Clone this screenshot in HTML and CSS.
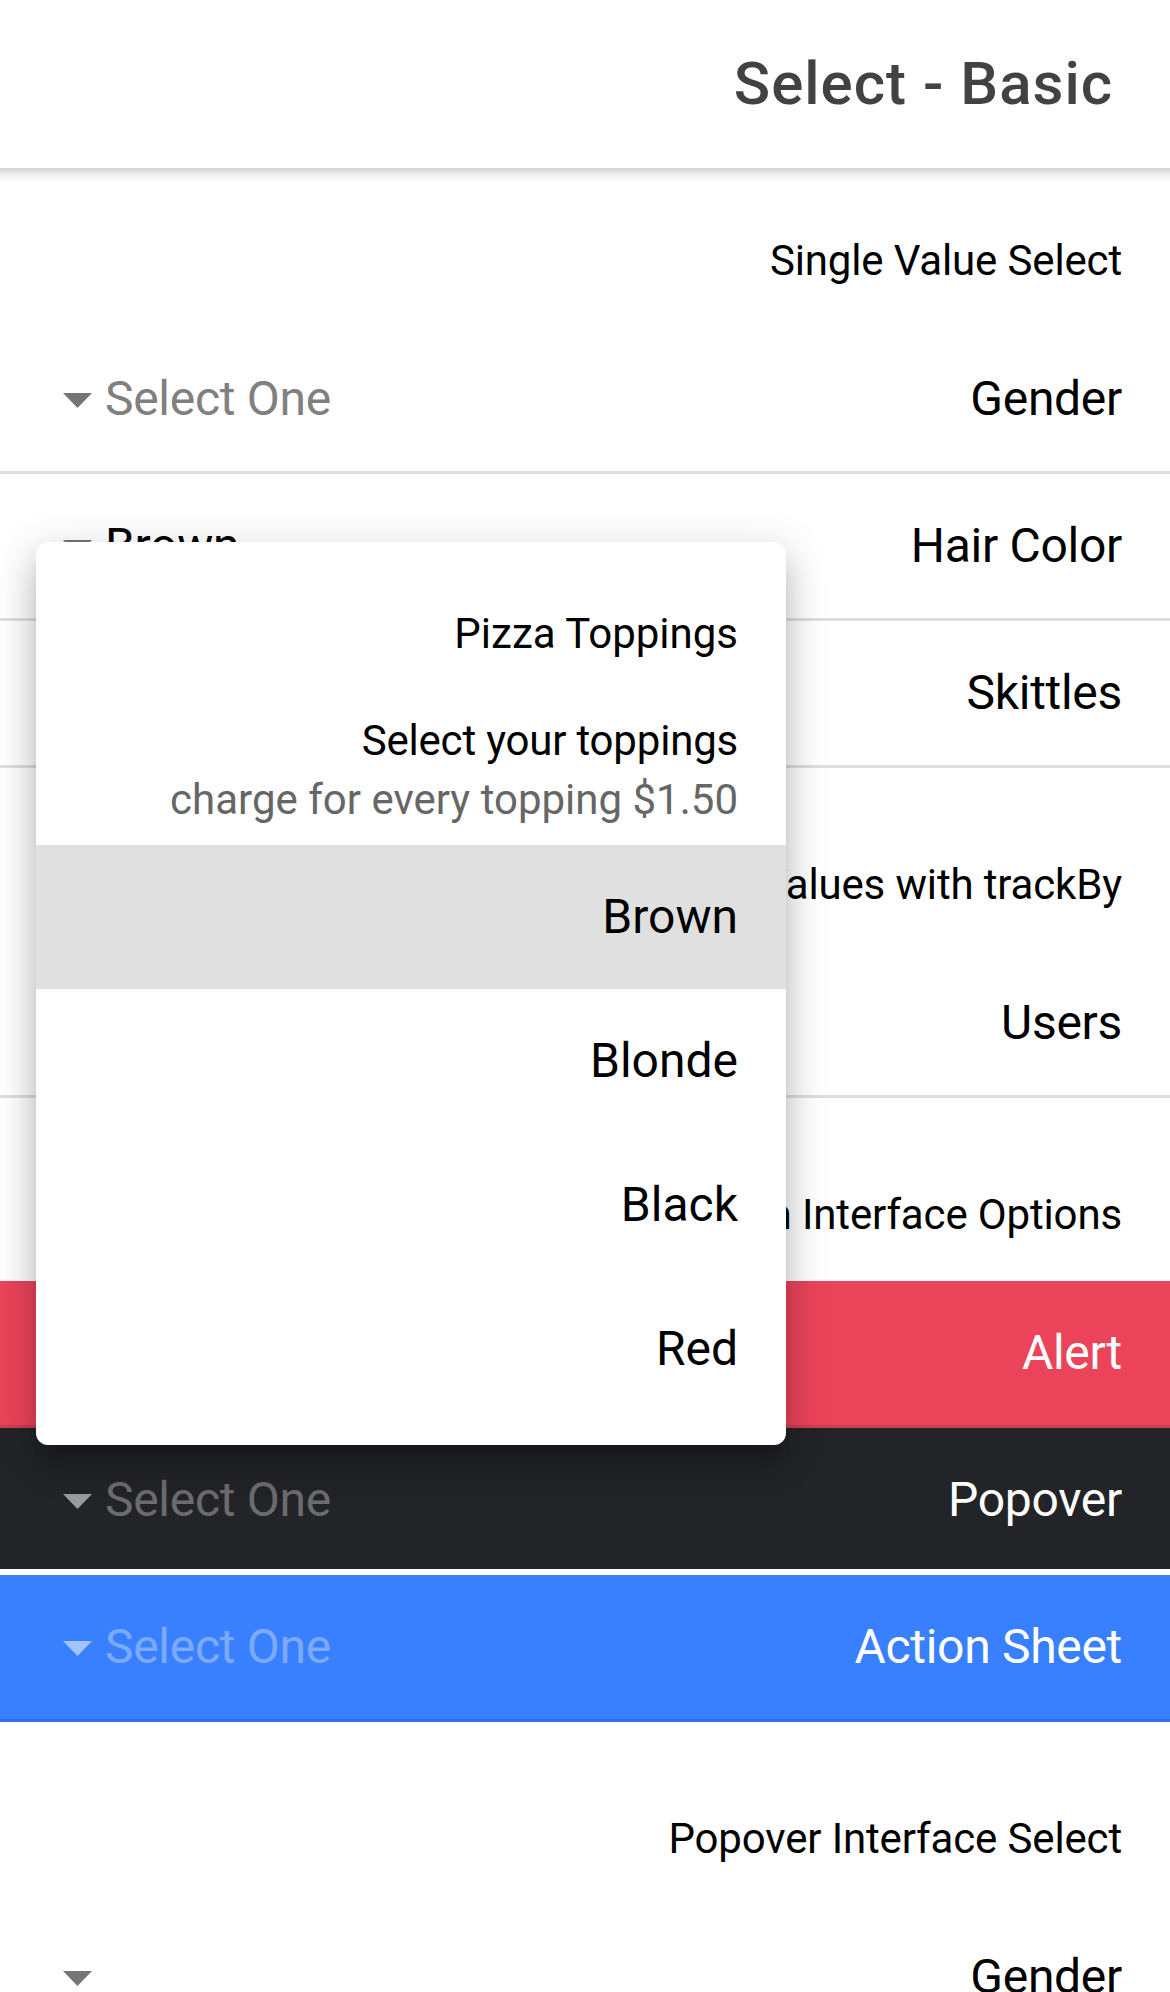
FILE: index.html
```html
<!DOCTYPE html>
<html lang="en">
<head>
<meta charset="utf-8">
<title>Select - Basic</title>
<link rel="stylesheet" href="styles.css">
</head>
<body>
<div class="app" dir="rtl">
  <header class="toolbar">
    <h1 class="title">Select - Basic</h1>
  </header>

  <main class="content">
    <section class="list">
      <div class="list-header">Single Value Select</div>
      <div class="item">
        <span class="item-label">Gender</span>
        <span class="select placeholder">
          <span class="select-text">Select One</span>
          <svg class="select-icon" width="29" height="15" viewBox="0 0 29 15"><path d="M0 0H29L14.5 15Z"/></svg>
        </span>
      </div>
      <div class="item">
        <span class="item-label">Hair Color</span>
        <span class="select">
          <span class="select-text">Brown</span>
          <svg class="select-icon" width="29" height="15" viewBox="0 0 29 15"><path d="M0 0H29L14.5 15Z"/></svg>
        </span>
      </div>
      <div class="item">
        <span class="item-label">Skittles</span>
        <span class="select">
          <span class="select-text">Red, Blue</span>
          <svg class="select-icon" width="29" height="15" viewBox="0 0 29 15"><path d="M0 0H29L14.5 15Z"/></svg>
        </span>
      </div>
    </section>

    <section class="list">
      <div class="list-header">Multiple Values with trackBy</div>
      <div class="item">
        <span class="item-label">Users</span>
        <span class="select">
          <span class="select-text">Alice, Bob</span>
          <svg class="select-icon" width="29" height="15" viewBox="0 0 29 15"><path d="M0 0H29L14.5 15Z"/></svg>
        </span>
      </div>
    </section>

    <section class="list">
      <div class="list-header">Select Custom Interface Options</div>
      <div class="item danger">
        <span class="item-label">Alert</span>
        <span class="select placeholder">
          <span class="select-text">Select One</span>
          <svg class="select-icon" width="29" height="15" viewBox="0 0 29 15"><path d="M0 0H29L14.5 15Z"/></svg>
        </span>
      </div>
      <div class="item dark">
        <span class="item-label">Popover</span>
        <span class="select placeholder">
          <span class="select-text">Select One</span>
          <svg class="select-icon" width="29" height="15" viewBox="0 0 29 15"><path d="M0 0H29L14.5 15Z"/></svg>
        </span>
      </div>
      <div class="item primary">
        <span class="item-label">Action Sheet</span>
        <span class="select placeholder">
          <span class="select-text">Select One</span>
          <svg class="select-icon" width="29" height="15" viewBox="0 0 29 15"><path d="M0 0H29L14.5 15Z"/></svg>
        </span>
      </div>
    </section>

    <section class="list">
      <div class="list-header">Popover Interface Select</div>
      <div class="item">
        <span class="item-label">Gender</span>
        <span class="select placeholder">
          <span class="select-text"></span>
          <svg class="select-icon" width="29" height="15" viewBox="0 0 29 15"><path d="M0 0H29L14.5 15Z"/></svg>
        </span>
      </div>
    </section>
  </main>

  <div class="popover">
    <div class="pop-header">Pizza Toppings</div>
    <div class="pop-sub">
      <h3>Select your toppings</h3>
      <p>charge for every topping $1.50</p>
    </div>
    <div class="pop-option selected">Brown</div>
    <div class="pop-option">Blonde</div>
    <div class="pop-option">Black</div>
    <div class="pop-option">Red</div>
  </div>
</div>
</body>
</html>
```

FILE: styles.css
```css
* {
  box-sizing: border-box;
  margin: 0;
  padding: 0;
}

html,
body {
  width: 100%;
  height: 100%;
  overflow: hidden;
  background: #fff;
}

body {
  font-family: Roboto, "Noto Sans", sans-serif;
  color: #000;
}

.app {
  position: relative;
  height: 1992px;
  overflow: hidden;
  direction: rtl;
}

.toolbar {
  position: relative;
  z-index: 2;
  height: 168px;
  display: flex;
  align-items: center;
  padding: 0 57px;
  background: #fff;
}

.toolbar::after {
  content: "";
  position: absolute;
  left: 0;
  right: 0;
  top: 100%;
  height: 15px;
  background: linear-gradient(to bottom, rgba(0, 0, 0, 0.18), rgba(0, 0, 0, 0.06) 45%, rgba(0, 0, 0, 0));
}

.title {
  font-size: 60px;
  font-weight: 500;
  line-height: 1;
  color: #424242;
  letter-spacing: 1px;
}

.list {
  padding: 24px 0;
}

.list-header {
  height: 135px;
  display: flex;
  align-items: center;
  padding: 3px 48px 0;
  font-size: 42px;
  line-height: 1;
  letter-spacing: -0.15px;
  color: #000;
}

.item {
  height: 147px;
  display: flex;
  align-items: center;
  padding: 0 48px 0 63px;
  border-bottom: 3px solid #dedede;
  font-size: 48px;
  line-height: 1;
  letter-spacing: -0.3px;
  color: #000;
}

.item-label {
  flex: 1;
}

.select {
  display: flex;
  align-items: center;
  gap: 13px;
  color: #000;
}

.select-icon {
  display: block;
  fill: #757575;
  margin-top: 2px;
}

.select.placeholder .select-text {
  color: #808080;
}

.item.danger {
  background: #eb445a;
  color: #fff;
  border-bottom-color: #cf3c4f;
}

.item.dark {
  background: #222428;
  color: #fff;
  padding-top: 3px;
  border-bottom: 6px solid #fff;
}

.item.dark .select-icon {
  fill: #999a9e;
}

.item.dark .select.placeholder .select-text {
  color: #6b6c70;
}

.item.primary {
  background: #3880ff;
  color: #fff;
  border-bottom-color: #3171e0;
}

.item.primary .select-icon {
  fill: #a3c5ff;
}

.item.primary .select.placeholder .select-text {
  color: #7caaff;
}

.popover {
  position: absolute;
  z-index: 5;
  left: 36px;
  top: 542px;
  width: 750px;
  padding: 24px 0;
  background: #fff;
  border-radius: 12px;
  overflow: hidden;
  box-shadow:
    0 15px 15px -9px rgba(0, 0, 0, 0.2),
    0 24px 30px 3px rgba(0, 0, 0, 0.14),
    0 9px 42px 6px rgba(0, 0, 0, 0.12);
}

.pop-header {
  height: 135px;
  display: flex;
  align-items: center;
  padding: 0 48px;
  font-size: 42px;
  line-height: 1;
  color: #000;
}

.pop-sub {
  height: 144px;
  padding: 14px 48px 0;
}

.pop-sub h3 {
  font-size: 42px;
  font-weight: 400;
  line-height: 51px;
  margin-bottom: 8px;
  letter-spacing: -0.2px;
  color: #000;
}

.pop-sub p {
  font-size: 42px;
  line-height: 51px;
  color: #666;
}

.pop-option {
  height: 144px;
  display: flex;
  align-items: center;
  padding: 0 48px;
  font-size: 48px;
  line-height: 1;
  color: #000;
}

.pop-option.selected {
  background: #e0e0e0;
}
```
